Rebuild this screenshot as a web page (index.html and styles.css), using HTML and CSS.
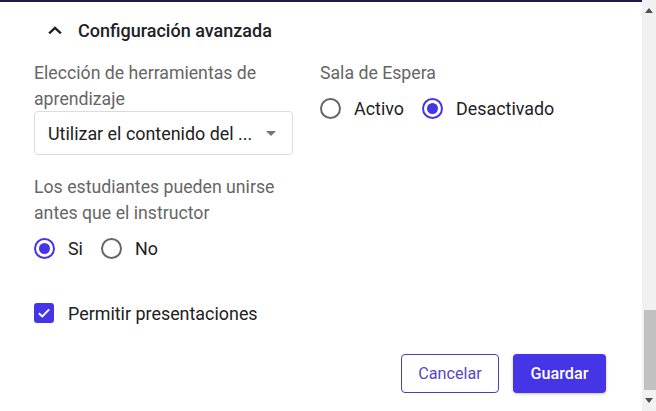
FILE: index.html
```html
<!DOCTYPE html>
<html lang="es">
<head>
<meta charset="utf-8">
<title>Configuración avanzada</title>
<link rel="stylesheet" href="styles.css">
</head>
<body>
<div class="frame">
  <main class="panel">
    <div class="section-head">
      <svg class="chevron" width="14" height="10" viewBox="0 0 14 10"><path d="M2 7.5 L7 2.8 L12 7.5" fill="none" stroke="#202124" stroke-width="2.4" stroke-linecap="square"/></svg>
      <span class="section-title">Configuración avanzada</span>
    </div>

    <div class="cols">
      <div class="field field-left">
        <div class="label">Elección de herramientas de aprendizaje</div>
        <div class="select">
          <span class="select-text">Utilizar el contenido del ...</span>
          <svg class="caret" width="10" height="5" viewBox="0 0 10 5"><path d="M0 0 H10 L5 5 Z" fill="#757575"/></svg>
        </div>
      </div>
      <div class="field">
        <div class="label">Sala de Espera</div>
        <div class="radio-row">
          <span class="radio"></span><span class="opt">Activo</span>
          <span class="radio checked"></span><span class="opt">Desactivado</span>
        </div>
      </div>
    </div>

    <div class="field field-left block2">
      <div class="label">Los estudiantes pueden unirse antes que el instructor</div>
      <div class="radio-row">
        <span class="radio checked"></span><span class="opt">Si</span>
        <span class="radio"></span><span class="opt">No</span>
      </div>
    </div>

    <div class="check-row">
      <span class="checkbox"><svg width="14" height="12" viewBox="0 0 14 12"><path d="M1.8 6.2 L5.3 9.4 L12.2 2.4" fill="none" stroke="#fff" stroke-width="2"/></svg></span>
      <span class="opt">Permitir presentaciones</span>
    </div>

    <div class="actions">
      <button class="btn btn-outline">Cancelar</button>
      <button class="btn btn-primary">Guardar</button>
    </div>
  </main>
  <div class="scrollbar">
    <svg class="arrow" width="8" height="5" viewBox="0 0 8 5"><path d="M0 5 H8 L4 0 Z" fill="#505050"/></svg>
    <div class="track"><div class="thumb"></div></div>
    <svg class="arrow" width="8" height="5" viewBox="0 0 8 5"><path d="M0 0 H8 L4 5 Z" fill="#505050"/></svg>
  </div>
</div>
</body>
</html>
```
FILE: styles.css
```css
* { box-sizing: border-box; }
html, body { margin: 0; padding: 0; }
body {
  font-family: Roboto, "Liberation Sans", sans-serif;
  background: #fff;
  color: #212121;
  width: 656px;
  height: 411px;
  overflow: hidden;
}
.frame {
  display: flex;
  height: 411px;
}
.panel {
  flex: 1;
  border-top: 2px solid #1e1b4b;
  padding: 0 36px 0 34px;
  display: flex;
  flex-direction: column;
}
.section-head {
  display: flex;
  align-items: center;
  height: 42px;
  margin-top: 7px;
  padding-left: 14px;
}
.chevron { margin-right: 16px; }
.section-title {
  font-size: 18px;
  font-weight: 500;
  color: #202124;
}
.cols {
  display: flex;
  gap: 27px;
  margin-top: 9px;
}
.field-left { width: 259px; }
.label {
  font-size: 17.7px;
  line-height: 26px;
  color: #666;
}
.select {
  margin-top: -1px;
  height: 44px;
  border: 1px solid #dcdcdc;
  border-radius: 4px;
  display: flex;
  align-items: center;
  justify-content: space-between;
  padding: 0 16px 0 13px;
}
.select-text { font-size: 17.9px; color: #212121; }
.radio-row {
  display: flex;
  align-items: center;
  height: 24px;
  margin-top: 10px;
}
.radio {
  width: 21px;
  height: 21px;
  border: 2px solid #666;
  border-radius: 50%;
  display: flex;
  align-items: center;
  justify-content: center;
  margin-right: 13px;
  flex: none;
}
.radio.checked { border-color: #4535e6; }
.radio.checked::after {
  content: "";
  width: 11px;
  height: 11px;
  border-radius: 50%;
  background: #4535e6;
}
.opt {
  font-size: 17.9px;
  color: #212121;
  margin-right: 18px;
}
.block2 { margin-top: 19px; }
.check-row {
  display: flex;
  align-items: center;
  height: 24px;
  margin-top: 41px;
}
.checkbox {
  width: 20px;
  height: 20px;
  border-radius: 3px;
  background: #4535e6;
  display: flex;
  align-items: center;
  justify-content: center;
  margin-right: 14px;
}
.actions {
  display: flex;
  justify-content: flex-end;
  gap: 14px;
  margin-top: 29px;
}
.btn {
  height: 39px;
  border-radius: 4px;
  font-family: Roboto, "Liberation Sans", sans-serif;
  font-size: 16.2px;
  cursor: pointer;
  padding: 0;
}
.btn-outline {
  width: 98px;
  background: #fff;
  border: 1px solid #4a3fb5;
  color: #5548c4;
}
.btn-primary {
  width: 93px;
  background: #4535e6;
  border: none;
  color: #fff;
  font-weight: 500;
  box-shadow: 0 1px 3px rgba(0,0,0,0.25);
}
.scrollbar {
  width: 14px;
  background: #f1f1f1;
  display: flex;
  flex-direction: column;
  align-items: center;
}
.arrow { margin: 8px 0; flex: none; }
.track {
  flex: 1;
  width: 100%;
  display: flex;
  flex-direction: column;
  justify-content: flex-end;
}
.thumb {
  height: 80px;
  margin: 0 0 0 2px;
  background: #c1c1c1;
}
```
